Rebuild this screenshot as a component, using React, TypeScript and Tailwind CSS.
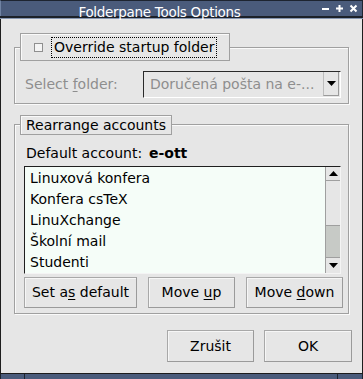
const font = { fontFamily: '"DejaVu Sans", Verdana, sans-serif' };

const Btn = ({ children, w, h }: { children: React.ReactNode; w: string; h: string }) => (
  <div
    className={`${w} ${h} flex items-center justify-center border border-[#a8a8a8] border-r-[#9a9a9a] border-b-[#9a9a9a] bg-[#e6e6e6] shadow-[inset_1px_1px_0_#f6f6f6] text-[14px] text-black`}
  >
    {children}
  </div>
);

const accounts = ['Linuxová konfera', 'Konfera csTeX', 'LinuXchange', 'Školní mail', 'Studenti'];

export default function App() {
  return (
    <div className="w-[363px] h-[379px] bg-[#e6e6e6] flex flex-col overflow-hidden" style={font}>
      {/* Title bar */}
      <div className="relative shrink-0">
        <div className="h-[16px] bg-[#4a5b7b] border-t border-l border-t-[#1d2430] border-l-[#7083a3] border-r border-r-[#1d2430]" />
        <div className="h-[2px] bg-[#1c2129]" />
        <div className="h-[1px] bg-[#8797b2]" />
        <div className="absolute inset-x-0 top-[6px] pr-[44px] text-center text-white text-[13.5px] leading-none tracking-[-0.3px]">
          Folderpane Tools Options
        </div>
        <div className="absolute right-[5px] top-[4px] flex items-center gap-[5px]">
          <svg width="9" height="9" viewBox="0 0 9 9"><rect x="1" y="4" width="7" height="2" fill="#fff" /></svg>
          <svg width="9" height="9" viewBox="0 0 9 9"><rect x="1" y="3.5" width="7" height="2" fill="#fff" /><rect x="3.5" y="1" width="2" height="7" fill="#fff" /></svg>
          <svg width="9" height="9" viewBox="0 0 9 9"><path d="M1.5 1.5 L7.5 7.5 M7.5 1.5 L1.5 7.5" stroke="#fff" strokeWidth="2" /></svg>
        </div>
      </div>

      {/* Content */}
      <div className="flex-1 border-l border-r border-[#1e1e1e] flex flex-col">
        {/* Group 1 */}
        <div className="mx-[13px] mt-[28px] h-[57px] border border-[#a0a0a0] shadow-[inset_1px_1px_0_#fafafa,1px_1px_0_#fafafa] flex flex-col">
          <div className="ml-[5px] -mt-[15px] w-[210px] h-[28px] shrink-0 border border-[#a0a0a0] bg-[#e6e6e6] shadow-[inset_1px_1px_0_#fafafa] flex items-center pl-[13px]">
            <div className="w-[9px] h-[9px] border border-[#8f8f8f] bg-[#f4f4f4]" />
            <div className="ml-[8px] h-[21px] px-[2px] border border-dotted border-black flex items-center text-[14px] text-black whitespace-nowrap">
              Override startup folder
            </div>
          </div>
          <div className="mt-[10px] pl-[10px] flex items-center">
            <div className="w-[118px] text-[14px] text-[#8e8e8e] whitespace-nowrap">
              Select <span className="underline underline-offset-2">f</span>older:
            </div>
            <div className="w-[198px] h-[27px] border border-t-[#2a2a2a] border-l-[#2a2a2a] border-b-white border-r-white flex items-stretch bg-[#e6e6e6]">
              <div className="flex-1 flex items-center pl-[6px] text-[14px] text-[#8e8e8e] whitespace-nowrap overflow-hidden">
                Doručená pošta na e-...
              </div>
              <div className="w-[16px] mr-[1px] mb-[1px] border-l border-[#bdbdbd] border-b border-r border-b-[#9a9a9a] border-r-[#9a9a9a] flex items-center justify-center">
                <svg width="9" height="6" viewBox="0 0 9 6"><path d="M0 0 H9 L4.5 5 Z" fill="#000" /></svg>
              </div>
            </div>
          </div>
        </div>

        {/* Group 2 */}
        <div className="mx-[13px] mt-[20px] h-[190px] border border-[#a0a0a0] shadow-[inset_1px_1px_0_#fafafa,1px_1px_0_#fafafa] flex flex-col">
          <div className="ml-[5px] -mt-[10px] w-[152px] h-[20px] shrink-0 border border-[#a0a0a0] bg-[#e6e6e6] shadow-[inset_1px_1px_0_#fafafa] flex items-center pl-[5px] text-[14px] text-black whitespace-nowrap">
            Rearrange accounts
          </div>
          <div className="mt-[8px] h-[20px] pl-[11px] flex items-center text-[14px] text-black">
            <div className="w-[123px]">Default account:</div>
            <div className="font-bold">e-ott</div>
          </div>
          <div className="ml-[9px] mt-[3px] w-[317px] h-[108px] border border-t-[#1f1f1f] border-l-[#1f1f1f] border-b-[#f4f4f4] border-r-[#f4f4f4] bg-[#f5fdf8] flex">
            <div className="flex-1 pt-[1px] pl-[5px] flex flex-col">
              {accounts.map((a) => (
                <div key={a} className="h-[21px] flex items-center text-[14px] text-black whitespace-nowrap">
                  {a}
                </div>
              ))}
            </div>
            <div className="w-[15px] flex flex-col border-l border-[#9f9f9f] bg-[#e6e6e6]">
              <div className="h-[14px] border-b border-[#9f9f9f] flex items-center justify-center">
                <svg width="9" height="5" viewBox="0 0 9 5"><path d="M0 5 H9 L4.5 0 Z" fill="#000" /></svg>
              </div>
              <div className="h-[44px]" />
              <div className="h-[33px] bg-[#c7cac6] border-t border-b border-[#9f9f9f]" />
              <div className="flex-1 flex items-center justify-center">
                <svg width="9" height="5" viewBox="0 0 9 5"><path d="M0 0 H9 L4.5 5 Z" fill="#000" /></svg>
              </div>
            </div>
          </div>
          <div className="ml-[9px] mt-[3px] flex gap-[11px]">
            <Btn w="w-[113px]" h="h-[31px]">
              Set a<span className="underline underline-offset-2">s</span>&nbsp;default
            </Btn>
            <Btn w="w-[87px]" h="h-[31px]">
              Move&nbsp;<span className="underline underline-offset-2">u</span>p
            </Btn>
            <Btn w="w-[97px]" h="h-[31px]">
              Move&nbsp;<span className="underline underline-offset-2">d</span>own
            </Btn>
          </div>
        </div>

        <div className="mt-[16px] pr-[10px] flex justify-end gap-[10px]">
          <Btn w="w-[87px]" h="h-[32px]">Zrušit</Btn>
          <Btn w="w-[88px]" h="h-[32px]">OK</Btn>
        </div>
      </div>

      {/* Bottom frame */}
      <div className="h-[1px] shrink-0 bg-[#1c1c1c]" />
      <div className="h-[5px] shrink-0 bg-[#4a5b7b] border-l border-r border-[#1d2430] flex">
        <div className="w-[24px] border-r border-[#1d2430]" />
        <div className="flex-1" />
        <div className="w-[25px] border-l border-[#1d2430]" />
      </div>
    </div>
  );
}
